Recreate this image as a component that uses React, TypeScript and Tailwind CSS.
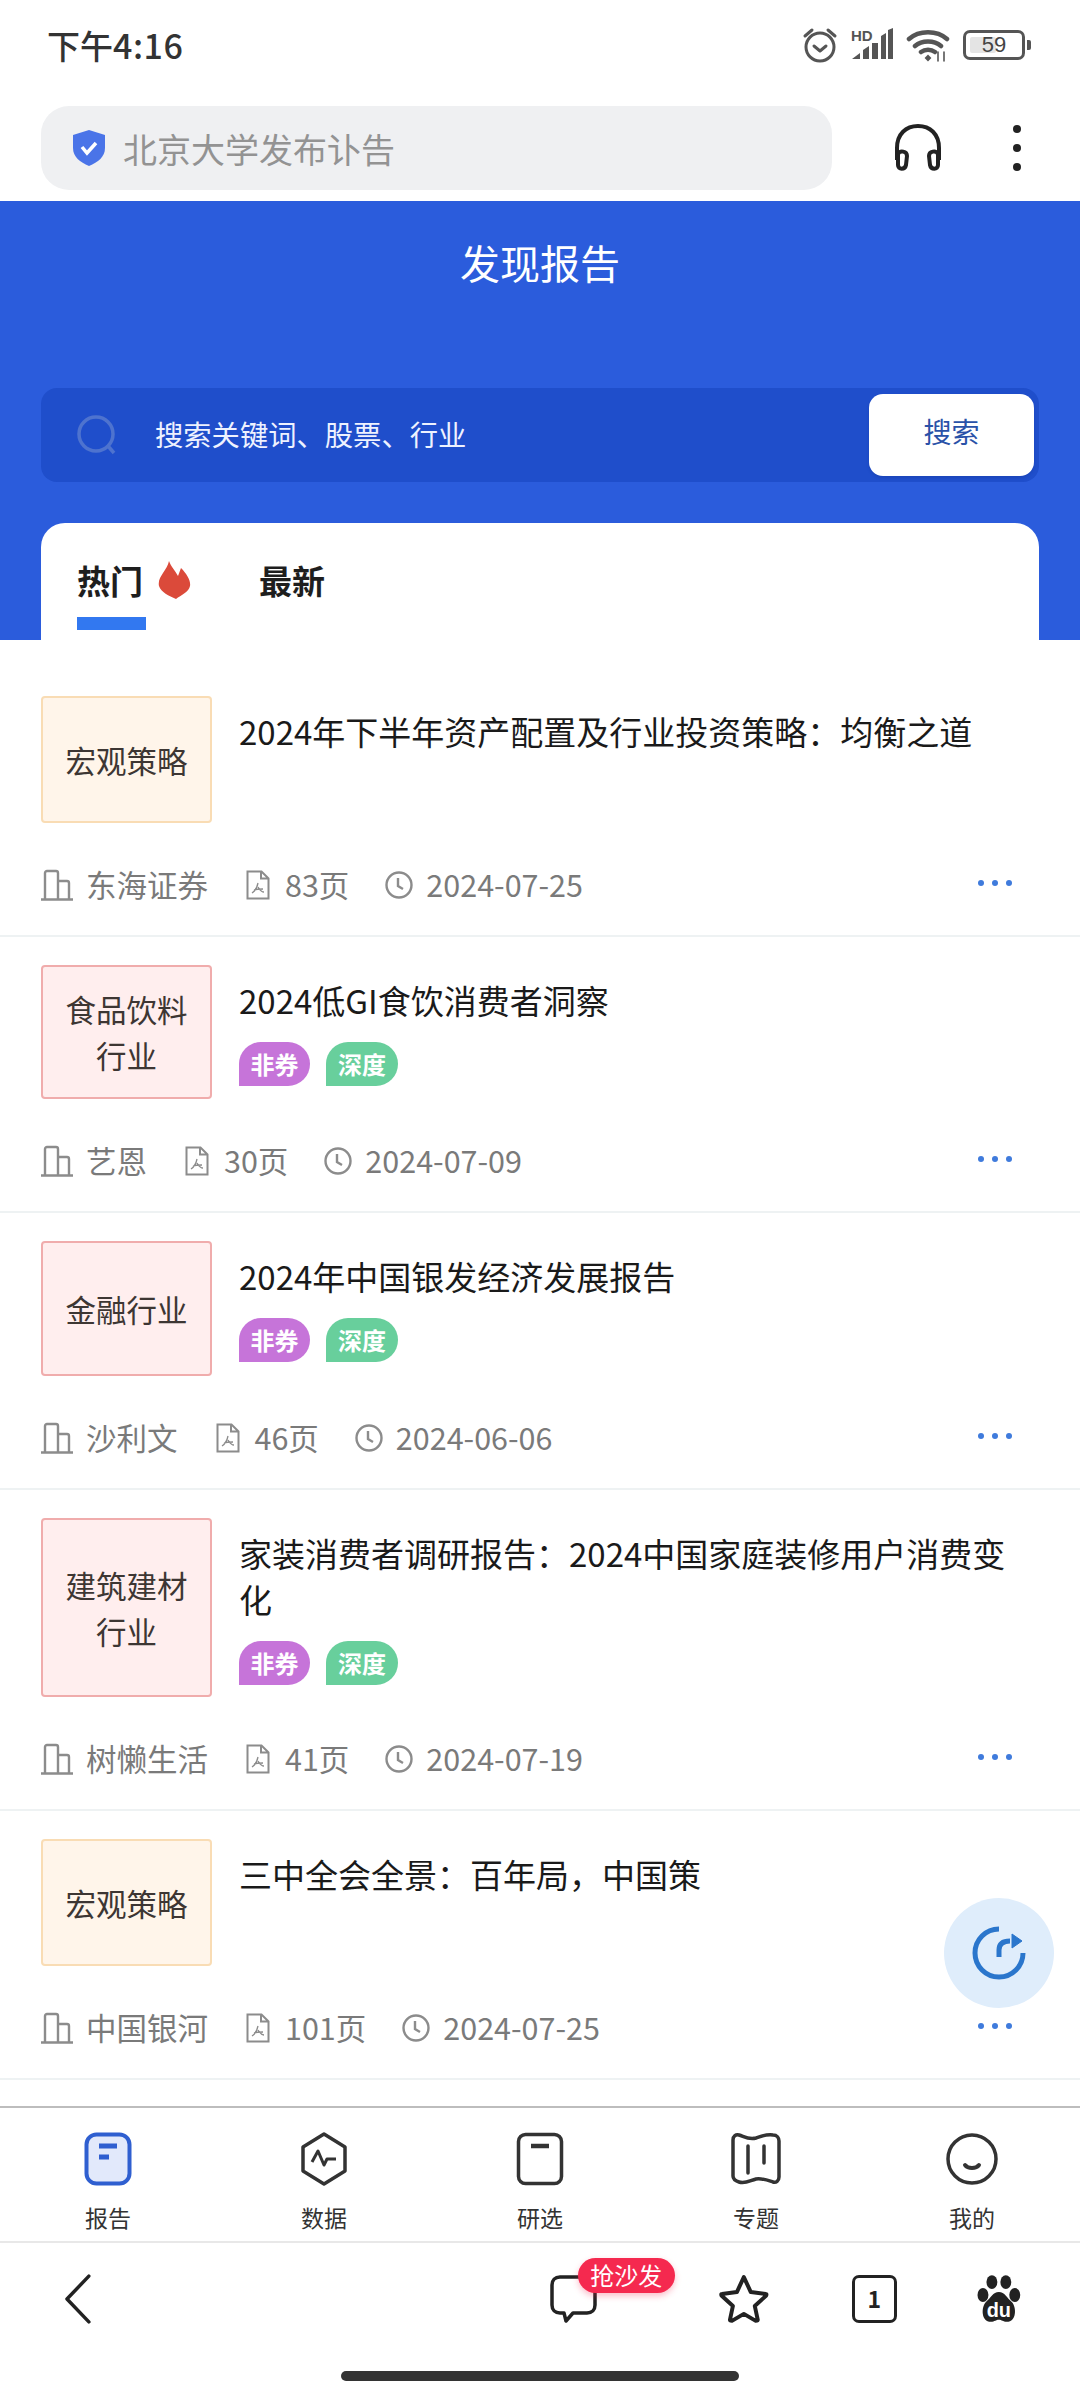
const cjk = "font-['Noto_Sans_CJK_SC','Noto_Sans',sans-serif]";

interface Report {
  tag: string[];
  tagClass: string;
  boxClass: string;
  title: string;
  badges?: boolean;
  org: string;
  pages: string;
  date: string;
}

const orange = 'bg-[#fff5ea] border-[#f9dcb4]';
const red = 'bg-[#ffeeee] border-[#f0acac]';

const reports: Report[] = [
  { tag: ['宏观策略'], tagClass: orange, boxClass: 'h-[127px]', title: '2024年下半年资产配置及行业投资策略：均衡之道', org: '东海证券', pages: '83页', date: '2024-07-25' },
  { tag: ['食品饮料', '行业'], tagClass: red, boxClass: 'h-[134px]', title: '2024低GI食饮消费者洞察', badges: true, org: '艺恩', pages: '30页', date: '2024-07-09' },
  { tag: ['金融行业'], tagClass: red, boxClass: 'h-[135px]', title: '2024年中国银发经济发展报告', badges: true, org: '沙利文', pages: '46页', date: '2024-06-06' },
  { tag: ['建筑建材', '行业'], tagClass: red, boxClass: 'h-[179px]', title: '家装消费者调研报告：2024中国家庭装修用户消费变化', badges: true, org: '树懒生活', pages: '41页', date: '2024-07-19' },
  { tag: ['宏观策略'], tagClass: orange, boxClass: 'h-[127px]', title: '三中全会全景：百年局，中国策', org: '中国银河', pages: '101页', date: '2024-07-25' },
];

function StatusIcons() {
  return (
    <div className="flex items-center gap-[13px]">
      <svg width="36" height="36" viewBox="0 0 36 36" fill="none" stroke="#555" strokeWidth="3" strokeLinecap="round" strokeLinejoin="round">
        <circle cx="18" cy="20" r="14" />
        <path d="M12 19l6 5 6-5M3 9l7-6M33 9l-7-6" />
      </svg>
      <svg width="42" height="34" viewBox="0 0 42 34">
        <text x="0" y="13" fontSize="15" fontWeight="700" fill="#555" fontFamily="Liberation Sans">HD</text>
        <path d="M1 31l8-6v6zM12 31V22l6-4v13zM21 31V15h6v16zM30 31V8l5-3v26zM37 31V2l5-2v31z" fill="#555" />
      </svg>
      <svg width="44" height="34" viewBox="0 0 44 34" fill="none" stroke="#555" strokeWidth="4.5" strokeLinecap="round">
        <path d="M3 11c10-9 28-9 38 0M9 18c7-6 19-6 26 0M15 24c4-3 10-3 14 0" />
        <path d="M20 30l2-2 2 2-2 2z" fill="#555" strokeWidth="2" />
        <path d="M32 24v9M38 24v9" strokeWidth="1.6" />
      </svg>
      <div className="flex items-center gap-[2px]">
        <div className="relative flex h-[30px] w-[62px] items-center justify-center rounded-[7px] border-[3px] border-[#555]">
          <div className="absolute left-[4px] top-[4px] h-[16px] w-[26px] rounded-[2px] bg-[#e4e4e4]" />
          <span className="relative font-['Liberation_Sans',sans-serif] text-[22px] leading-none text-[#444]">59</span>
        </div>
        <div className="h-[10px] w-[4px] rounded-r-[2px] bg-[#555]" />
      </div>
    </div>
  );
}

function BuildingIcon() {
  return (
    <svg width="32" height="32" viewBox="0 0 32 32" fill="none" stroke="#8c8c8c" strokeWidth="2.4" className="shrink-0">
      <path d="M0 30.5h32M4 30V4c0-1 1-2 2-2h9c1 0 2 1 2 2v26M17 12h9c1 0 2 1 2 2v16" />
    </svg>
  );
}

function PdfIcon() {
  return (
    <svg width="24" height="30" viewBox="0 0 24 30" fill="none" stroke="#8c8c8c" strokeWidth="2" className="shrink-0">
      <path d="M1.5 1.5h14l7 7v20h-21zM15 1.5v7h7" />
      <path d="M12 13c-1 5-3 8-6 10M12 17c2 3 3 5 6 5M8 20c3-1 6-1 9-1" strokeWidth="1.3" />
    </svg>
  );
}

function ClockIcon() {
  return (
    <svg width="28" height="28" viewBox="0 0 28 28" fill="none" stroke="#8c8c8c" strokeWidth="2.4" className="shrink-0">
      <circle cx="14" cy="14" r="12.5" />
      <path d="M13 7v8l5 3" />
    </svg>
  );
}

function ReportItem({ report }: { report: Report }) {
  return (
    <div className="border-b-2 border-[#eef2f3] pl-[41px] pr-[68px] pb-[30px] pt-[28px]">
      <div className="flex items-start">
        <div className={`flex w-[171px] shrink-0 flex-col items-center justify-center rounded-[4px] border-2 text-[30.5px] leading-[46px] text-[#3d3633] ${report.tagClass} ${report.boxClass}`}>
          {report.tag.map((t) => (
            <span key={t}>{t}</span>
          ))}
        </div>
        <div className="ml-[27px] mt-[12px] min-w-0 flex-1">
          <div className="text-[33px] leading-[46px] text-[#1a1a1a]">{report.title}</div>
          {report.badges && (
            <div className="mt-[19px] flex gap-[16px] text-[24px] font-bold leading-[44px] text-white">
              <span className="flex h-[44px] w-[71px] items-center justify-center rounded-t-[22px] rounded-br-[22px] bg-[#c674d9]">非券</span>
              <span className="flex h-[44px] w-[72px] items-center justify-center rounded-t-[22px] rounded-br-[22px] bg-[#68cf9c]">深度</span>
            </div>
          )}
        </div>
      </div>
      <div className="mt-[42px] flex h-[40px] items-center text-[30.5px] text-[#7a7a7a]">
        <BuildingIcon />
        <span className="ml-[13px]">{report.org}</span>
        <span className="ml-[38px] flex items-center">
          <PdfIcon />
          <span className="ml-[15px]">{report.pages}</span>
        </span>
        <span className="ml-[36px] flex items-center">
          <ClockIcon />
          <span className="ml-[13px]">{report.date}</span>
        </span>
        <span className="ml-auto flex gap-[8px] pb-[4px]">
          <i className="h-[6px] w-[6px] rounded-full bg-[#3f7bdc]" />
          <i className="h-[6px] w-[6px] rounded-full bg-[#3f7bdc]" />
          <i className="h-[6px] w-[6px] rounded-full bg-[#3f7bdc]" />
        </span>
      </div>
    </div>
  );
}

function NavIcon({ name }: { name: string }) {
  const stroke = '#333';
  if (name === '报告') {
    return (
      <svg width="48" height="54" viewBox="0 0 48 54" fill="none">
        <rect x="2.5" y="2.5" width="43" height="49" rx="10" fill="#e2e9fb" stroke="#2f5fd0" strokeWidth="4" />
        <path d="M15 14h18M15 25h10" stroke="#2f5fd0" strokeWidth="5" />
      </svg>
    );
  }
  if (name === '数据') {
    return (
      <svg width="48" height="54" viewBox="0 0 48 54" fill="none" stroke={stroke} strokeWidth="3.5" strokeLinejoin="round">
        <path d="M24 2l21 13v24L24 52 3 39V15z" />
        <path d="M12 30l6-11 6 14 3-6h9" strokeWidth="3" />
      </svg>
    );
  }
  if (name === '研选') {
    return (
      <svg width="48" height="54" viewBox="0 0 48 54" fill="none" stroke={stroke} strokeWidth="3.5">
        <rect x="2.5" y="2.5" width="43" height="49" rx="7" />
        <path d="M15 14h18" strokeWidth="4.5" />
      </svg>
    );
  }
  if (name === '专题') {
    return (
      <svg width="52" height="54" viewBox="0 0 52 54" fill="none" stroke={stroke} strokeWidth="3.5" strokeLinejoin="round" strokeLinecap="round">
        <path d="M3 8c0-4 3-6 6-5 6 2 10 5 17 3 6-2 10-4 17-3 4 0 6 3 6 6v36c0 4-3 6-6 5-6-2-11-4-17-3-7 2-11 5-17 3-3-1-6-3-6-6z" />
        <path d="M18 14v27M34 14v17" />
      </svg>
    );
  }
  return (
    <svg width="52" height="54" viewBox="0 0 52 54" fill="none" stroke={stroke} strokeWidth="3.5" strokeLinecap="round">
      <circle cx="26" cy="27" r="24" />
      <path d="M19 33c3 4 11 4 14 0" strokeWidth="4" />
    </svg>
  );
}

export default function App() {
  return (
    <div className={`relative flex h-[2400px] w-[1080px] flex-col overflow-hidden bg-white ${cjk}`}>
      {/* status bar */}
      <div className="flex h-[92px] items-center justify-between pl-[47px] pr-[49px] pb-[3px]">
        <span className="text-[33px] font-medium text-[#333]">
          下午<span className="text-[34px] tracking-[0.5px]">4:16</span>
        </span>
        <StatusIcons />
      </div>

      {/* address bar */}
      <div className="mt-[14px] flex h-[84px] items-center pl-[41px]">
        <div className="flex h-[84px] w-[791px] items-center rounded-[28px] bg-[#eff0f2] pl-[31px]">
          <svg width="34" height="36" viewBox="0 0 34 36">
            <path d="M17 0l16 5v13c0 9-7 14-16 18C8 32 1 27 1 18V5z" fill="#4a74e8" />
            <path d="M10 17l5 6 9-10" fill="none" stroke="#fff" strokeWidth="3.5" />
          </svg>
          <span className="ml-[17px] text-[34px] text-[#939393]">北京大学发布讣告</span>
        </div>
        <svg width="50" height="48" viewBox="0 0 50 48" fill="none" stroke="#222" strokeWidth="4" className="ml-[61px]">
          <path d="M4 36V24C4 10 13 2 25 2s21 8 21 22v12" />
          <path d="M5 30c2-4 9-3 9 2l-1 9c-1 5-8 5-8 0zM45 30c-2-4-9-3-9 2l1 9c1 5 8 5 8 0z" />
        </svg>
        <div className="ml-[70px] flex flex-col gap-[11px]">
          <i className="h-[8px] w-[8px] rounded-full bg-[#222]" />
          <i className="h-[8px] w-[8px] rounded-full bg-[#222]" />
          <i className="h-[8px] w-[8px] rounded-full bg-[#222]" />
        </div>
      </div>

      {/* blue header */}
      <div className="mt-[11px] flex h-[439px] flex-col bg-[#2b5cdc] px-[41px]">
        <div className="mt-[33px] h-[56px] text-center text-[40px] leading-[56px] text-white">发现报告</div>
        <div className="mt-[98px] flex h-[94px] items-center rounded-[16px] bg-[#1f4ecb] pl-[36px] pr-[5px]">
          <svg width="40" height="40" viewBox="0 0 40 40" fill="none" stroke="#4e73cf" strokeWidth="3.5">
            <circle cx="19" cy="19" r="17" />
            <path d="M31 31l6 7" />
          </svg>
          <span className="ml-[38px] pb-[2px] text-[28.3px] text-[#eef2ff]">搜索关键词、股票、行业</span>
          <div className="ml-auto flex h-[82px] w-[165px] items-center justify-center rounded-[14px] bg-white pb-[9px] text-[28px] text-[#2a52a8] shadow-[0_2px_3px_rgba(15,40,120,0.2)]">
            搜索
          </div>
        </div>
        <div className="mt-[41px] flex flex-1 items-start rounded-t-[24px] bg-white pl-[36px] pt-[35px]">
          <div className="flex flex-col">
            <div className="flex h-[44px] items-center">
              <span className="text-[33px] font-bold leading-[44px] text-[#1e1e1e]">热门</span>
              <svg width="33" height="38" viewBox="0 0 33 38" className="ml-[15px]">
                <path d="M11 0c2 6 6 9 9 15 1-3 2-5 3-8 6 6 10 13 9 18-1 6-9 9-14 13C11 35 3 31 1 25-1 16 9 10 11 0z" fill="#db4a3a" />
              </svg>
            </div>
            <div className="mt-[15px] h-[13px] w-[69px] bg-[#3278f0]" />
          </div>
          <span className="ml-[68px] text-[33px] font-bold leading-[44px] text-[#1e1e1e]">最新</span>
        </div>
      </div>

      {/* report list */}
      <div className="min-h-0 flex-1 overflow-hidden pt-[28px]">
        {reports.map((r) => (
          <ReportItem key={r.title} report={r} />
        ))}
      </div>

      {/* tab bar */}
      <div className="grid h-[135px] shrink-0 grid-cols-5 border-t-2 border-[#bdbdbd]">
        {['报告', '数据', '研选', '专题', '我的'].map((n) => (
          <div key={n} className="flex flex-col items-center pt-[24px]">
            <NavIcon name={n} />
            <span className="mt-[14px] text-[23px] leading-[34px] text-[#333]">{n}</span>
          </div>
        ))}
      </div>

      {/* toolbar */}
      <div className="flex h-[113px] shrink-0 items-center border-t-2 border-[#e8e8e8] pl-[65px] pr-[58px]">
        <svg width="26" height="50" viewBox="0 0 26 50" fill="none" stroke="#222" strokeWidth="3.5" strokeLinecap="round" strokeLinejoin="round">
          <path d="M24 2L2 25l22 23" />
        </svg>
        <div className="relative ml-[459px] h-[48px] w-[47px]">
          <svg width="47" height="48" viewBox="0 0 47 48" fill="none" stroke="#222" strokeWidth="3.5" strokeLinejoin="round">
            <path d="M10 2h27c5 0 8 3 8 8v20c0 5-3 8-8 8H23l-7 8-2-8h-4c-5 0-8-3-8-8V10c0-5 3-8 8-8z" />
          </svg>
          <div className="absolute left-[28px] top-[-17px] flex h-[35px] w-[97px] items-center justify-center rounded-[18px] bg-[#f5294f] text-[24px] text-white shadow-[0_3px_6px_rgba(245,41,79,0.3)]">
            抢沙发
          </div>
        </div>
        <svg width="50" height="50" viewBox="0 0 50 50" fill="none" stroke="#222" strokeWidth="4" strokeLinejoin="round" className="ml-[122px]">
          <path d="M25 3l7 15 15 2c1 0 1 1 0 2L36 32l3 14c0 1-1 1-2 1l-12-7-12 7c-1 0-2 0-2-1l3-14L3 22c-1-1-1-2 0-2l15-2z" />
        </svg>
        <div className="ml-[83px] flex h-[48px] w-[46px] items-center justify-center rounded-[7px] border-[3.5px] border-[#222] text-[23px] font-bold text-[#222]">
          1
        </div>
        <svg width="46" height="48" viewBox="0 0 46 48" className="ml-[79px]">
          <ellipse cx="7" cy="20" rx="5.5" ry="7" fill="#222" />
          <ellipse cx="16" cy="7" rx="5.5" ry="7" fill="#222" />
          <ellipse cx="30" cy="7" rx="5.5" ry="7" fill="#222" />
          <ellipse cx="39" cy="20" rx="5.5" ry="7" fill="#222" />
          <path d="M23 17c6 0 8 6 13 10 5 5 5 20-5 20-4 0-5-2-8-2s-4 2-8 2c-10 0-10-15-5-20 5-4 7-10 13-10z" fill="#222" />
          <text x="23" y="42" textAnchor="middle" fontSize="20" fontWeight="700" fill="#fff" fontFamily="Liberation Sans">du</text>
        </svg>
      </div>

      {/* home indicator */}
      <div className="flex h-[46px] shrink-0 justify-center pt-[17px]">
        <div className="h-[10px] w-[398px] rounded-full bg-[#333]" />
      </div>

      {/* floating share button */}
      <div className="absolute left-[944px] top-[1898px] flex h-[110px] w-[110px] items-center justify-center rounded-full bg-[#dfedfb]">
        <svg width="54" height="54" viewBox="0 0 54 54" fill="none" stroke="#2a76cc" strokeWidth="5">
          <path d="M27 3a24 24 0 1 0 24 24" />
          <path d="M27 31v-7c0-6 4-9 11-9" />
          <path d="M40 8l10 7-10 7z" fill="#2a76cc" strokeWidth="1" />
        </svg>
      </div>
    </div>
  );
}
